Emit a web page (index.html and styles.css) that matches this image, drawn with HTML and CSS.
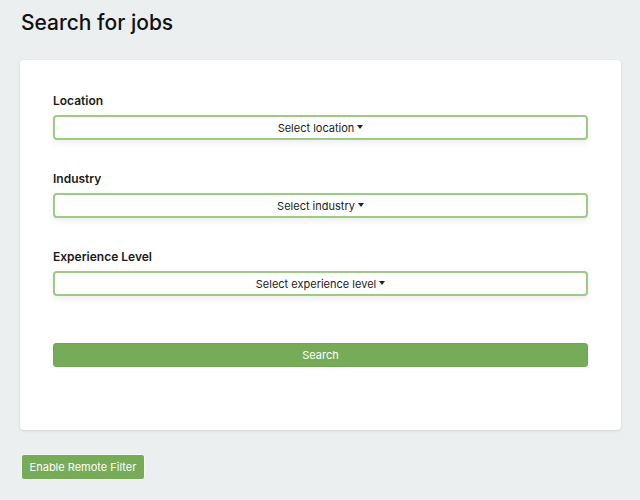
FILE: index.html
```html
<!DOCTYPE html>
<html>
<head>
<meta charset="utf-8">
<link rel="stylesheet" href="styles.css">
</head>
<body>
<h1 class="title">Search for jobs</h1>
<div class="card">
  <div class="group">
    <div class="label">Location</div>
    <div class="select" role="button">Select location<span class="caret"></span></div>
  </div>
  <div class="group">
    <div class="label">Industry</div>
    <div class="select" role="button">Select industry<span class="caret"></span></div>
  </div>
  <div class="group">
    <div class="label">Experience Level</div>
    <div class="select" role="button">Select experience level<span class="caret"></span></div>
  </div>
  <button class="search">Search</button>
</div>
<button class="remote">Enable Remote Filter</button>
</body>
</html>
```
FILE: styles.css
```css
html, body {
  margin: 0;
  padding: 0;
}
body {
  background: #ebeff0;
  font-family: Inter, "Open Sans", sans-serif;
  color: #1d1d1d;
  padding: 0 19px 0 20px;
}
.title {
  margin: 0;
  padding: 11px 0 0 1px;
  font-size: 21px;
  line-height: 24px;
  font-weight: 500;
  color: #111;
}
.card {
  margin-top: 25px;
  background: #fff;
  border-radius: 4px;
  box-shadow: 0 1px 3px rgba(0, 0, 0, 0.12);
  padding: 33px 33px 63px;
  display: flex;
  flex-direction: column;
}
.group {
  display: flex;
  flex-direction: column;
  margin-bottom: 31px;
}
.group:last-of-type {
  margin-bottom: 47px;
}
.label {
  font-size: 12px;
  line-height: 16px;
  font-weight: 600;
  color: #1a1a1a;
  margin-bottom: 6px;
}
.select {
  box-sizing: border-box;
  height: 25px;
  border: 2px solid #9dca86;
  border-radius: 4px;
  background: #fff;
  font-size: 11px;
  color: #222;
  display: flex;
  align-items: center;
  justify-content: center;
  box-shadow: 0 3px 6px rgba(0, 0, 0, 0.07);
  cursor: pointer;
}
.caret {
  display: inline-block;
  margin-left: 3px;
  width: 0;
  height: 0;
  border-left: 3px solid transparent;
  border-right: 3px solid transparent;
  border-top: 4px solid #222;
  position: relative;
  top: -1px;
}
.search {
  height: 24px;
  border: 1px solid #70a652;
  border-radius: 3px;
  background: #76ab57;
  color: #fff;
  font-family: inherit;
  font-size: 11px;
  padding: 0;
}
.remote {
  margin-top: 24px;
  margin-left: 1px;
  height: 26px;
  width: 124px;
  border: 1px solid #f4f7f2;
  border-radius: 3px;
  background: #76ab57;
  color: #fff;
  font-family: inherit;
  font-size: 11px;
  padding: 0;
}
```
